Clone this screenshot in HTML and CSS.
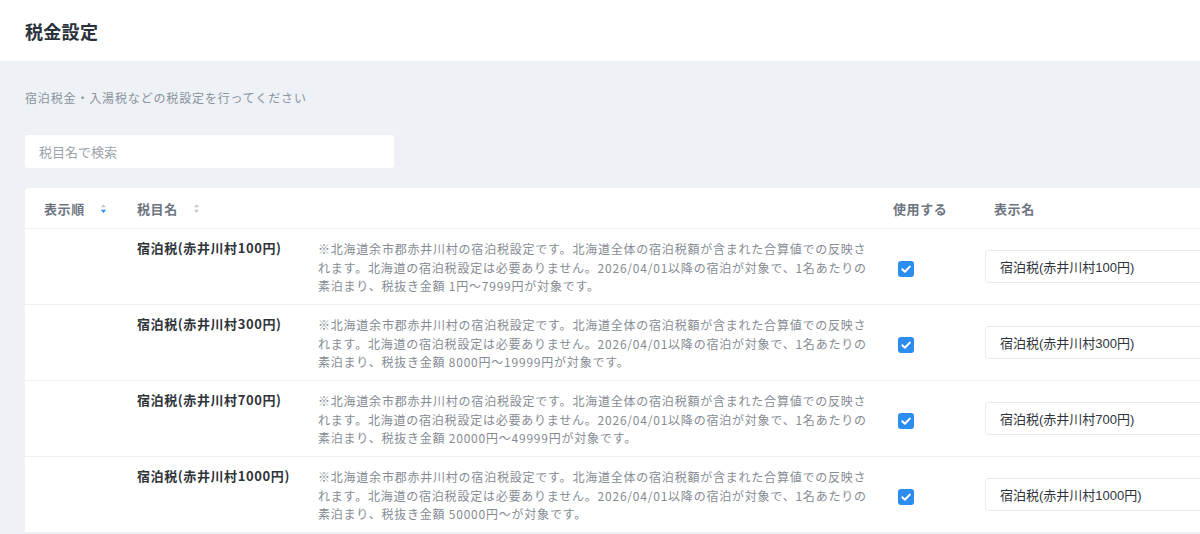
FILE: index.html
```html
<!DOCTYPE html>
<html lang="ja">
<head>
<meta charset="utf-8">
<title>税金設定</title>
<link rel="stylesheet" href="styles.css">
</head>
<body>
<header class="topbar">
  <h1 class="title">税金設定</h1>
</header>
<main class="content">
  <p class="lead">宿泊税金・入湯税などの税設定を行ってください</p>
  <div class="search"><input class="search-input" type="text" placeholder="税目名で検索"></div>
  <section class="card">
    <div class="row head">
      <div class="cell h-order">表示順 <span class="sort"><svg viewBox="0 0 8 12" width="7" height="11"><path d="M4 1 L7 4.5 H1 Z" fill="#c3c8cf"/><path d="M4 11 L7 7.5 H1 Z" fill="#2d8cf0"/></svg></span></div>
      <div class="cell h-name">税目名 <span class="sort"><svg viewBox="0 0 8 12" width="7" height="11"><path d="M4 1 L7 4.5 H1 Z" fill="#c3c8cf"/><path d="M4 11 L7 7.5 H1 Z" fill="#c3c8cf"/></svg></span></div>
      <div class="cell"></div>
      <div class="cell h-use">使用する</div>
      <div class="cell h-disp">表示名</div>
    </div>

    <div class="row">
      <div class="cell"></div>
      <div class="cell name">宿泊税(赤井川村100円)</div>
      <div class="cell desc">※北海道余市郡赤井川村の宿泊税設定です。北海道全体の宿泊税額が含まれた合算値での反映されます。北海道の宿泊税設定は必要ありません。2026/04/01以降の宿泊が対象で、1名あたりの素泊まり、税抜き金額 1円～7999円が対象です。</div>
      <div class="cell use"><span class="check"><svg viewBox="0 0 16 16" width="16" height="16"><path d="M4.3 8.3 L6.9 10.8 L11.8 5.6" fill="none" stroke="#fff" stroke-width="2" stroke-linecap="round" stroke-linejoin="round"/></svg></span></div>
      <div class="cell disp"><input class="disp-input" type="text" value="宿泊税(赤井川村100円)"></div>
    </div>

    <div class="row">
      <div class="cell"></div>
      <div class="cell name">宿泊税(赤井川村300円)</div>
      <div class="cell desc">※北海道余市郡赤井川村の宿泊税設定です。北海道全体の宿泊税額が含まれた合算値での反映されます。北海道の宿泊税設定は必要ありません。2026/04/01以降の宿泊が対象で、1名あたりの素泊まり、税抜き金額 8000円～19999円が対象です。</div>
      <div class="cell use"><span class="check"><svg viewBox="0 0 16 16" width="16" height="16"><path d="M4.3 8.3 L6.9 10.8 L11.8 5.6" fill="none" stroke="#fff" stroke-width="2" stroke-linecap="round" stroke-linejoin="round"/></svg></span></div>
      <div class="cell disp"><input class="disp-input" type="text" value="宿泊税(赤井川村300円)"></div>
    </div>

    <div class="row">
      <div class="cell"></div>
      <div class="cell name">宿泊税(赤井川村700円)</div>
      <div class="cell desc">※北海道余市郡赤井川村の宿泊税設定です。北海道全体の宿泊税額が含まれた合算値での反映されます。北海道の宿泊税設定は必要ありません。2026/04/01以降の宿泊が対象で、1名あたりの素泊まり、税抜き金額 20000円～49999円が対象です。</div>
      <div class="cell use"><span class="check"><svg viewBox="0 0 16 16" width="16" height="16"><path d="M4.3 8.3 L6.9 10.8 L11.8 5.6" fill="none" stroke="#fff" stroke-width="2" stroke-linecap="round" stroke-linejoin="round"/></svg></span></div>
      <div class="cell disp"><input class="disp-input" type="text" value="宿泊税(赤井川村700円)"></div>
    </div>

    <div class="row">
      <div class="cell"></div>
      <div class="cell name">宿泊税(赤井川村1000円)</div>
      <div class="cell desc">※北海道余市郡赤井川村の宿泊税設定です。北海道全体の宿泊税額が含まれた合算値での反映されます。北海道の宿泊税設定は必要ありません。2026/04/01以降の宿泊が対象で、1名あたりの素泊まり、税抜き金額 50000円～が対象です。</div>
      <div class="cell use"><span class="check"><svg viewBox="0 0 16 16" width="16" height="16"><path d="M4.3 8.3 L6.9 10.8 L11.8 5.6" fill="none" stroke="#fff" stroke-width="2" stroke-linecap="round" stroke-linejoin="round"/></svg></span></div>
      <div class="cell disp"><input class="disp-input" type="text" value="宿泊税(赤井川村1000円)"></div>
    </div>
  </section>
</main>
</body>
</html>
```

FILE: styles.css
```css
html, body {
  margin: 0;
  padding: 0;
}
body {
  width: 1200px;
  height: 534px;
  overflow: hidden;
  background: #eef1f5;
  font-family: "Noto Sans CJK JP", "Noto Sans", sans-serif;
  color: #333;
}
.topbar {
  height: 61px;
  background: #fff;
  display: flex;
  align-items: center;
  padding-left: 25px;
}
.title {
  margin: 0;
  font-size: 18px;
  font-weight: 700;
  color: #2b323b;
  line-height: 1;
  letter-spacing: 0.3px;
}
.content {
  padding: 28px 0 0 25px;
  overflow: hidden;
}
.lead {
  margin: 0;
  font-size: 12px;
  line-height: 18px;
  letter-spacing: 0.85px;
  color: #8a939e;
}
.search {
  margin-top: 28px;
  width: 369px;
}
.search-input {
  box-sizing: border-box;
  width: 100%;
  height: 33px;
  border: none;
  border-radius: 3px;
  background: #fff;
  padding: 0 14px;
  font-family: "Noto Sans CJK JP", sans-serif;
  font-size: 13px;
  color: #333;
  outline: none;
}
.search-input::placeholder {
  color: #9ca3ab;
}
.card {
  margin-top: 20px;
  width: 1260px;
  background: #fff;
  border-radius: 4px 0 0 0;
}
.row {
  display: grid;
  grid-template-columns: 112px 181px 575px 92px 1fr;
  border-bottom: 1px solid #edf0f3;
  height: 75px;
}
.row.head {
  height: 40px;
  align-items: center;
}
.cell {
  box-sizing: border-box;
}
.head .cell {
  font-size: 13px;
  font-weight: 700;
  color: #6d7580;
  letter-spacing: 0.6px;
  display: flex;
  align-items: center;
}
.h-order {
  padding-left: 19px;
}
.sort {
  display: inline-flex;
  margin-left: 15px;
}
.h-name .sort {
  margin-left: 15px;
}
.h-disp {
  padding-left: 9px;
}
.name {
  padding-top: 9px;
  font-size: 13px;
  font-weight: 700;
  line-height: 19px;
  letter-spacing: 0.6px;
  color: #2f343a;
}
.desc {
  padding-top: 11px;
  padding-right: 20px;
  font-size: 12px;
  line-height: 18.5px;
  letter-spacing: 0.78px;
  color: #858b93;
}
.use {
  display: flex;
  align-items: center;
  padding-left: 5px;
  padding-top: 5px;
}
.check {
  display: inline-flex;
  width: 16px;
  height: 16px;
  border-radius: 3px;
  background: #2d8cf0;
}
.disp {
  display: flex;
  align-items: center;
}
.disp-input {
  box-sizing: border-box;
  width: 260px;
  height: 33px;
  border: 1px solid #e9ecef;
  border-radius: 3px;
  padding: 0 14px;
  font-family: "Liberation Sans", "Noto Sans CJK JP", sans-serif;
  font-size: 13px;
  color: #2f343a;
  background: #fff;
  outline: none;
}
```
